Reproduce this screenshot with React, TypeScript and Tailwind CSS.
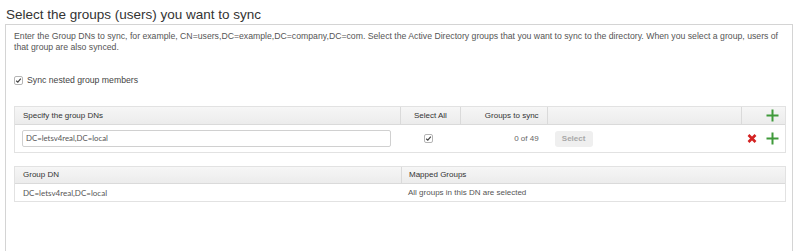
import React from "react"

const font = { fontFamily: '"Liberation Sans", Arial, sans-serif' }

function Check() {
  return (
    <span className="inline-flex h-[9px] w-[9px] items-center justify-center rounded-[2px] border border-[#b5b5b5] bg-white">
      <svg width="7" height="7" viewBox="0 0 7 7">
        <path d="M1.2 3.8 L2.8 5.2 L5.8 1.6" fill="none" stroke="#444" strokeWidth="1.2" />
      </svg>
    </span>
  )
}

function Plus() {
  return (
    <svg width="13" height="13" viewBox="0 0 13 13">
      <path d="M6.5 0.5 V12.5 M0.5 6.5 H12.5" stroke="#3f9a3a" strokeWidth="2" />
    </svg>
  )
}

function RedX() {
  return (
    <svg width="10" height="9" viewBox="0 0 10 9">
      <path d="M1.5 1 L8.5 8 M8.5 1 L1.5 8" stroke="#d42222" strokeWidth="2.6" />
    </svg>
  )
}

export default function App() {
  return (
    <div className="h-[251px] w-[800px] overflow-hidden bg-white text-[#333]" style={font}>
      <h1 className="pl-[6px] pt-[5px] text-[13.5px] leading-[19px] text-[#333]">
        Select the groups (users) you want to sync
      </h1>

      <div className="ml-[5px] h-[240px] w-[788px] border border-[#d4d4d4] px-[8px] pt-[6px]">
        <p className="text-[8.7px] leading-[11px] text-[#555]">
          Enter the Group DNs to sync, for example, CN=users,DC=example,DC=company,DC=com. Select the Active
          Directory groups that you want to sync to the directory. When you select a group, users of that group are
          also synced.
        </p>

        <label className="mt-[21px] flex items-center gap-[4px] text-[8.7px] text-[#444]">
          <Check />
          <span>Sync nested group members</span>
        </label>

        {/* group DN table */}
        <div className="mt-[19px] w-[772px] border border-[#e2e2e2] text-[8px]">
          <div className="flex h-[18px] border-b border-[#dadada] bg-gradient-to-b from-[#f6f6f6] to-[#ececec] text-[#333]">
            <div className="flex w-[386px] items-center pl-[8px]">Specify the group DNs</div>
            <div className="flex w-[60px] items-center justify-center border-l border-[#dadada]">Select All</div>
            <div className="flex w-[87px] items-center justify-end border-l border-[#dadada] pr-[8px]">Groups to sync</div>
            <div className="w-[195px] border-l border-[#dadada]" />
            <div className="flex w-[44px] items-center justify-end border-l border-[#dadada] pr-[6px]">
              <Plus />
            </div>
          </div>
          <div className="flex h-[27px] items-center bg-white">
            <div className="flex w-[386px] items-center pl-[7px]">
              <div
                className="flex h-[17px] w-[369px] items-center rounded-[2px] border border-[#d0d0d0] pl-[3px] text-[7.8px] text-[#555]"
                style={{ fontFamily: 'Lato, "Liberation Sans", sans-serif' }}
              >
                DC=letsv4real,DC=local
              </div>
            </div>
            <div className="flex w-[60px] justify-center pr-[2px]">
              <Check />
            </div>
            <div className="w-[87px] pr-[8px] text-right text-[#666]">0 of 49</div>
            <div className="w-[195px] pl-[8px]">
              <span className="inline-flex h-[16px] w-[38px] items-center justify-center rounded-[3px] bg-[#efefef] text-[8px] font-bold text-[#a8a8a8]">
                Select
              </span>
            </div>
            <div className="flex w-[44px] items-center justify-end gap-[9px] pr-[6px]">
              <RedX />
              <Plus />
            </div>
          </div>
        </div>

        {/* mapped groups table */}
        <div className="mt-[13px] w-[772px] border border-[#e2e2e2] text-[8px]">
          <div className="flex h-[17px] border-b border-[#dadada] bg-gradient-to-b from-[#f6f6f6] to-[#ececec] text-[#333]">
            <div className="flex w-[386px] items-center pl-[8px]">Group DN</div>
            <div className="flex flex-1 items-center border-l border-[#dadada] pl-[7px]">Mapped Groups</div>
          </div>
          <div className="flex h-[17px] items-center text-[#555]">
            <div className="w-[386px] pl-[8px]" style={{ fontFamily: 'Lato, "Liberation Sans", sans-serif' }}>
              DC=letsv4real,DC=local
            </div>
            <div className="flex-1 pl-[7px]">All groups in this DN are selected</div>
          </div>
        </div>
      </div>
    </div>
  )
}
